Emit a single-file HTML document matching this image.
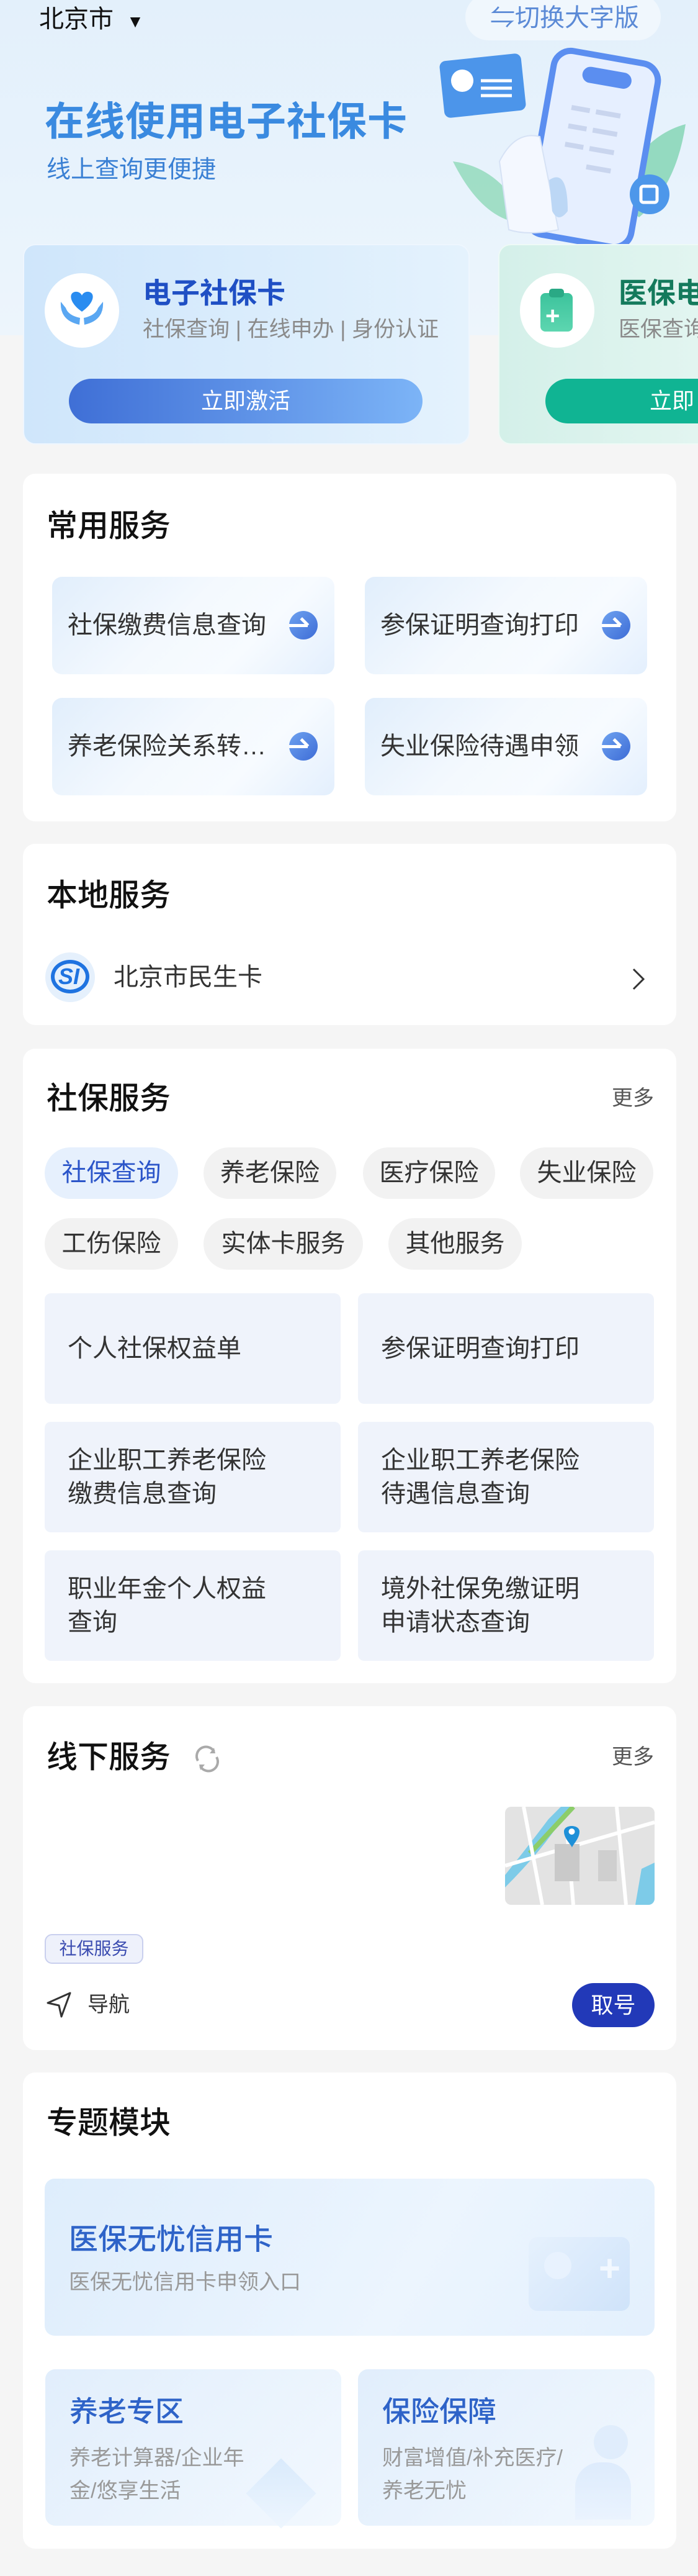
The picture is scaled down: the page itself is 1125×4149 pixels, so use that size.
<!DOCTYPE html>
<html><head><meta charset="utf-8"><style>
*{margin:0;padding:0;box-sizing:border-box}
html,body{width:1125px;height:4149px;overflow:hidden}
body{background:#f5f5f5;font-family:"Liberation Sans","Noto Sans CJK SC",sans-serif;color:#222}
#w{position:relative;width:1125px;height:4149px;overflow:hidden}
.a{position:absolute}
.hero{left:0;top:0;width:1125px;height:540px;background:linear-gradient(180deg,#e3f0fb 0%,#e8f3fc 60%,#edf5fc 100%)}
.card{position:absolute;left:37px;width:1053px;background:#fff;border-radius:20px}
.h{position:absolute;left:38px;font-size:50px;font-weight:500;color:#111;line-height:1}
.more{position:absolute;right:36px;font-size:34px;color:#555;line-height:1}
.svc{position:absolute;width:455px;height:157px;border-radius:16px;background:linear-gradient(135deg,#e1eefc 0%,#f4f9fe 45%,#f7fbff 70%,#e3effd 100%);font-size:40px;color:#333;line-height:157px;padding-left:25px}
.svc i{position:absolute;right:27px;top:55px;width:46px;height:46px;border-radius:50%;background:linear-gradient(135deg,#6ea2f0,#3d6cd6)}
.svc i:before{content:"";position:absolute;left:0;top:21px;width:30px;height:5px;background:#fff}
.svc i:after{content:"";position:absolute;left:21px;top:10px;width:16px;height:5px;background:#fff;transform:rotate(45deg);transform-origin:0 0}
.chip{position:absolute;height:83px;border-radius:42px;background:#f2f2f2;font-size:40px;color:#333;line-height:83px;text-align:center}
.g{position:absolute;width:477px;height:178px;border-radius:10px;background:#eff3fb;font-size:40px;color:#333;line-height:54px;padding:0 0 0 37px;display:flex;align-items:center}
</style></head><body><div id="w">
<div class="a hero"></div>
<div class="a" style="left:63px;top:6px;font-size:40px;line-height:50px;color:#111">北京市 <span style="font-size:28px;margin-left:10px">▼</span></div>
<div class="a" style="left:750px;top:-10px;width:315px;height:75px;border-radius:38px;background:rgba(255,255,255,0.45)"></div>
<div class="a" style="left:790px;top:4px;font-size:40px;line-height:50px;color:#5b8ad6">⇋切换大字版</div>
<div class="a" style="left:72px;top:158px;font-size:64px;font-weight:700;line-height:76px;color:#3a8ae0;letter-spacing:1px">在线使用电子社保卡</div>
<div class="a" style="left:75px;top:250px;font-size:39px;line-height:48px;color:#3a80d4">线上查询更便捷</div>
<svg class="a" style="left:700px;top:70px" width="425" height="340" viewBox="0 0 425 340">
<path d="M290 250 Q330 150 405 130 Q390 230 330 280 Z" fill="#7fd3b0" opacity=".8"/>
<path d="M30 190 Q110 200 150 290 Q80 290 30 190 Z" fill="#8fd8b8" opacity=".8"/>
<rect x="170" y="20" width="170" height="300" rx="28" fill="#e6efff" stroke="#5b8ef0" stroke-width="10" transform="rotate(10 255 170)"/>
<rect x="218" y="40" width="80" height="26" rx="13" fill="#5b8ef0" transform="rotate(10 255 170)"/>
<g stroke="#c9d5ee" stroke-width="8" transform="rotate(10 255 170)"><path d="M210 110h30M250 110h40M210 140h30M250 140h40M210 170h30M250 170h40M250 200h40"/></g>
<path d="M105 190 Q130 140 170 150 L200 300 Q150 310 120 300 Z" fill="#f4f8ff" stroke="#d6e2f5" stroke-width="2"/>
<path d="M185 220 Q215 200 215 270 Q200 290 190 270Z" fill="#bcd7f5"/>
<rect x="12" y="22" width="132" height="92" rx="10" fill="#4c95ea" transform="rotate(-6 78 68)"/>
<circle cx="45" cy="60" r="18" fill="#fff"/>
<path d="M75 60h50M75 72h50M75 84h50" stroke="#fff" stroke-width="5"/>
<circle cx="347" cy="243" r="32" fill="#4d97ea"/>
<rect x="333" y="230" width="26" height="26" rx="4" fill="none" stroke="#fff" stroke-width="5"/>
</svg>
<div class="a" style="left:37px;top:393px;width:720px;height:323px;border-radius:20px;background:linear-gradient(90deg,#cfe6fb,#e4f2fd);border:2px solid #eef6fe"></div>
<div class="a" style="left:72px;top:440px;width:120px;height:120px;border-radius:50%;background:#fff"></div>
<svg class="a" style="left:92px;top:460px" width="80" height="80" viewBox="0 0 80 80">
<path d="M40 42 C20 28 18 12 29 10 C35 9 39 13 40 16 C41 13 45 9 51 10 C62 12 60 28 40 42Z" fill="#2a8cf0"/>
<path d="M6 26 Q4 56 36 63 L37 52 Q18 48 14 36 Z" fill="#5aa7f2"/>
<path d="M74 26 Q76 56 44 63 L43 52 Q62 48 66 36 Z" fill="#5aa7f2"/>
</svg>
<div class="a" style="left:230px;top:444px;font-size:46px;font-weight:700;line-height:56px;color:#1f4fc4">电子社保卡</div>
<div class="a" style="left:230px;top:509px;font-size:35px;line-height:44px;color:#8a8a8a;white-space:pre">社保查询 | 在线申办 | 身份认证</div>
<div class="a" style="left:111px;top:610px;width:570px;height:72px;border-radius:36px;background:linear-gradient(90deg,#3f6fd6,#7cb4f7);color:#fff;font-size:36px;line-height:72px;text-align:center">立即激活</div>
<div class="a" style="left:803px;top:393px;width:322px;height:323px;border-radius:20px 0 0 20px;background:linear-gradient(90deg,#d4f0e9,#e2f5f0);border:2px solid #eefaf6;border-right:none"></div>
<div class="a" style="left:838px;top:440px;width:120px;height:120px;border-radius:50%;background:#fff"></div>
<div class="a" style="left:871px;top:472px;width:52px;height:62px;border-radius:8px;background:linear-gradient(#3cc39c,#5dd6b0)"></div>
<div class="a" style="left:885px;top:465px;width:24px;height:14px;border-radius:5px;background:#2aa985"></div>
<div class="a" style="left:879px;top:489px;font-size:40px;line-height:40px;color:#fff;font-weight:700">+</div>
<div class="a" style="left:997px;top:444px;width:128px;overflow:hidden;font-size:46px;font-weight:700;line-height:56px;color:#147a5c;white-space:nowrap">医保电子凭证</div>
<div class="a" style="left:997px;top:509px;width:128px;overflow:hidden;font-size:35px;line-height:44px;color:#8a8a8a;white-space:nowrap">医保查询</div>
<div class="a" style="left:879px;top:610px;width:246px;height:72px;border-radius:36px 0 0 36px;background:#10b493;color:#fff;font-size:36px;line-height:72px;padding-left:168px;overflow:hidden;white-space:nowrap">立即</div>

<div class="card" style="top:763px;height:560px">
<div class="h" style="top:59px">常用服务</div>
<div class="svc" style="left:47px;top:166px">社保缴费信息查询<i></i></div>
<div class="svc" style="left:551px;top:166px">参保证明查询打印<i></i></div>
<div class="svc" style="left:47px;top:361px">养老保险关系转…<i></i></div>
<div class="svc" style="left:551px;top:361px">失业保险待遇申领<i></i></div>
</div>
<div class="card" style="top:1359px;height:292px">
<div class="h" style="top:58px">本地服务</div>
<div class="a" style="left:36px;top:175px;width:80px;height:80px;border-radius:50%;background:#e5f0fc"></div>
<div class="a" style="left:45px;top:187px;width:62px;height:54px;border-radius:50%;border:6px solid #1f73e0"></div>
<div class="a" style="left:57px;top:192px;font-size:36px;font-style:italic;font-weight:700;color:#1f73e0;line-height:44px">SI</div>
<div class="a" style="left:146px;top:192px;font-size:40px;line-height:46px;color:#333">北京市民生卡</div>
<svg class="a" style="left:980px;top:198px" width="24" height="40" viewBox="0 0 24 40"><path d="M4 4 L20 20 L4 36" fill="none" stroke="#333" stroke-width="3"/></svg>
</div>
<div class="card" style="top:1689px;height:1022px">
<div class="h" style="top:55px">社保服务</div>
<div class="more" style="top:63px">更多</div>
<div class="chip" style="left:35px;top:159px;width:215px;background:#e6f0fd;color:#2b55c9">社保查询</div>
<div class="chip" style="left:291px;top:159px;width:214px">养老保险</div>
<div class="chip" style="left:548px;top:159px;width:213px">医疗保险</div>
<div class="chip" style="left:801px;top:159px;width:215px">失业保险</div>
<div class="chip" style="left:35px;top:273px;width:215px">工伤保险</div>
<div class="chip" style="left:291px;top:273px;width:257px">实体卡服务</div>
<div class="chip" style="left:589px;top:273px;width:215px">其他服务</div>
<div class="g" style="left:35px;top:394px">个人社保权益单</div>
<div class="g" style="left:540px;top:394px">参保证明查询打印</div>
<div class="g" style="left:35px;top:601px">企业职工养老保险<br>缴费信息查询</div>
<div class="g" style="left:540px;top:601px">企业职工养老保险<br>待遇信息查询</div>
<div class="g" style="left:35px;top:808px">职业年金个人权益<br>查询</div>
<div class="g" style="left:540px;top:808px">境外社保免缴证明<br>申请状态查询</div>
</div>
<div class="card" style="top:2748px;height:554px">
<div class="h" style="top:57px">线下服务</div>
<svg class="a" style="left:274px;top:62px" width="46" height="46" viewBox="0 0 46 46"><path d="M8 26 A15 15 0 0 1 34 11 M38 20 A15 15 0 0 1 12 35" fill="none" stroke="#aaa" stroke-width="4"/><path d="M34 5 L36 14 L27 14Z M12 41 L10 32 L19 32Z" fill="#aaa"/></svg>
<div class="more" style="top:65px">更多</div>
<svg class="a" style="left:777px;top:162px;border-radius:10px" width="241" height="158" viewBox="0 0 241 158">
<rect width="241" height="158" fill="#e3e3e3"/>
<path d="M0 110 Q40 60 70 20 L90 0 L105 0 Q80 40 55 70 Q30 100 0 130Z" fill="#7dcbe8"/>
<path d="M40 75 L110 0" stroke="#8ccd6a" stroke-width="8"/>
<path d="M0 95 L241 25 M30 0 L60 158 M180 0 L195 158 M100 40 L110 158" stroke="#fff" stroke-width="6"/>
<rect x="80" y="60" width="40" height="60" fill="#c9c9c9"/><rect x="150" y="70" width="30" height="50" fill="#cfcfcf"/>
<path d="M220 100 L241 90 L241 158 L210 158Z" fill="#7dcbe8"/>
<path d="M95 40 C95 28 120 28 120 40 C120 52 108 62 108 66 C108 62 95 52 95 40Z" fill="#1e90d8"/><circle cx="107.5" cy="40" r="5" fill="#fff"/>
</svg>
<div class="a" style="left:35px;top:367px;width:159px;height:48px;border-radius:12px;background:#eef1fb;border:2px solid #c9cfee;color:#3a4bb0;font-size:28px;line-height:44px;text-align:center">社保服务</div>
<svg class="a" style="left:36px;top:458px" width="46" height="46" viewBox="0 0 46 46"><path d="M40 4 L4 20 L22 24 L26 42 Z" fill="none" stroke="#333" stroke-width="3" stroke-linejoin="round"/></svg>
<div class="a" style="left:104px;top:460px;font-size:34px;line-height:42px;color:#333">导航</div>
<div class="a" style="left:885px;top:446px;width:133px;height:71px;border-radius:36px;background:#2239b8;color:#fff;font-size:36px;line-height:71px;text-align:center">取号</div>
</div>
<div class="card" style="top:3338px;height:767px">
<div class="h" style="top:56px">专题模块</div>
<div class="a" style="left:35px;top:171px;width:983px;height:253px;border-radius:16px;background:linear-gradient(120deg,#deedfc,#ecf5fe 60%,#e3f0fd)">
<div class="a" style="left:39px;top:70px;font-size:47px;font-weight:500;color:#2e63c8;line-height:56px">医保无忧信用卡</div>
<div class="a" style="left:39px;top:145px;font-size:34px;color:#999;line-height:44px">医保无忧信用卡申领入口</div>
<div class="a" style="left:780px;top:94px;width:163px;height:119px;border-radius:14px;background:linear-gradient(135deg,#e6f1fd,#cfe3fa)"></div>
<div class="a" style="left:805px;top:118px;width:44px;height:44px;border-radius:50%;background:#e8f2fe"></div>
<div class="a" style="left:893px;top:115px;font-size:60px;line-height:60px;color:#f2f8ff;font-weight:700">+</div>
</div>
<div class="a" style="left:36px;top:478px;width:477px;height:252px;border-radius:16px;background:linear-gradient(135deg,#e1eefc,#f2f8fe)">
<div class="a" style="left:39px;top:40px;font-size:46px;font-weight:500;color:#2e63c8;line-height:56px">养老专区</div>
<div class="a" style="left:39px;top:117px;font-size:34px;color:#999;line-height:53px">养老计算器/企业年<br>金/悠享生活</div>
<div class="a" style="left:340px;top:160px;width:80px;height:80px;background:linear-gradient(135deg,#d9eafc,#eef6fe);transform:rotate(45deg)"></div>
</div>
<div class="a" style="left:540px;top:478px;width:478px;height:252px;border-radius:16px;background:linear-gradient(135deg,#e1eefc,#f2f8fe)">
<div class="a" style="left:39px;top:40px;font-size:46px;font-weight:500;color:#2e63c8;line-height:56px">保险保障</div>
<div class="a" style="left:39px;top:117px;font-size:34px;color:#999;line-height:53px">财富增值/补充医疗/<br>养老无忧</div>
<div class="a" style="left:380px;top:90px;width:55px;height:55px;border-radius:50%;background:#e0edfc"></div>
<div class="a" style="left:350px;top:150px;width:90px;height:92px;border-radius:40px 40px 0 0;background:linear-gradient(#ddebfc,#eaf3fe)"></div>
</div>
</div>
</div></body></html>
